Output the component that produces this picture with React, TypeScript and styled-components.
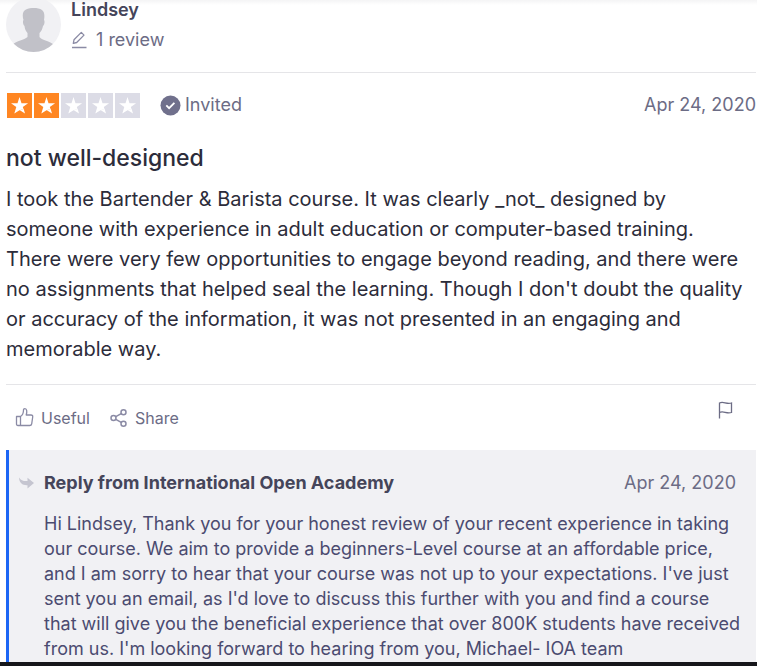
import React from "react";
import styled, { createGlobalStyle } from "styled-components";

const GlobalStyle = createGlobalStyle`
  *, *::before, *::after { box-sizing: border-box; }
  body {
    margin: 0;
    background: #fff;
    color: #2c2c3a;
    font-family: Inter, "Liberation Sans", Arial, sans-serif;
  }
`;

const Page = styled.main`
  border-bottom: 4px solid #16171b;
  background: linear-gradient(#f4f4f5, #fff) top / 100% 5px no-repeat;
`;

const Review = styled.article`
  padding: 0 1px 0 6px;
`;

const Consumer = styled.header`
  display: flex;
  gap: 10px;
  height: 73px;
  border-bottom: 1px solid #e5e5e8;
`;

const ConsumerText = styled.div`
  display: flex;
  flex-direction: column;
`;

const Name = styled.strong`
  font-size: 18px;
  line-height: 20px;
  font-weight: 600;
  color: #45455a;
`;

const ReviewCount = styled.span`
  display: flex;
  align-items: center;
  gap: 8px;
  margin-top: 10px;
  font-size: 18px;
  line-height: 20px;
  color: #6c6c85;
`;

const RatingRow = styled.div`
  display: flex;
  align-items: center;
  margin-top: 19px;
  line-height: 26px;
`;

const Stars = styled.div`
  display: flex;
  gap: 2px;
  margin: 0 20px 0 1px;
`;

const Star = styled.span<{ $on: boolean }>`
  display: flex;
  width: 25px;
  height: 25px;
  background: ${(p) => (p.$on ? "#ff8622" : "#dcdce6")};
`;

const Invited = styled.span`
  display: flex;
  align-items: center;
  gap: 4px;
  font-size: 18px;
  color: #6c6c85;
`;

const DateText = styled.time`
  margin-left: auto;
  white-space: nowrap;
  font-size: 18px;
  font-weight: 400;
  color: #6c6c85;
`;

const Title = styled.h2`
  margin: 26px 0 0;
  font-size: 23px;
  line-height: 28px;
  font-weight: 500;
`;

const Body = styled.p`
  margin: 12px 0 0;
  font-size: 20px;
  line-height: 30px;
`;

const Actions = styled.div`
  display: flex;
  align-items: center;
  gap: 20px;
  height: 66px;
  margin-top: 20px;
  padding: 0 22px 0 9px;
  border-top: 1px solid #e5e5e8;
`;

const Action = styled.button`
  display: flex;
  align-items: center;
  gap: 7px;
  padding: 0;
  border: 0;
  background: none;
  color: #6c6c85;
  font: inherit;
  font-size: 16px;
  line-height: 22px;
  cursor: pointer;
`;

const FlagAction = styled(Action)`
  margin: 0 0 16px auto;
`;

const Reply = styled.section`
  padding: 21px 20px 0 9px;
  border-left: 3px solid #1c66f5;
  background: #f1f1f4;
`;

const ReplyHead = styled.header`
  display: flex;
  align-items: center;
  gap: 9px;
  line-height: 24px;
`;

const ReplyTitle = styled.h3`
  margin: 0;
  font-size: 18px;
  font-weight: 700;
  color: #45455a;
`;

const ReplyBody = styled.p`
  margin: 16px -10px 0 26px;
  padding-bottom: 1px;
  font-size: 18px;
  line-height: 25px;
  color: #4b4b70;
`;

const Avatar = () => (
  <svg width="55" height="52" viewBox="0 3 55 52" role="img" aria-label="Lindsey's avatar">
    <defs>
      <clipPath id="avatar-circle"><circle cx="27.5" cy="27.5" r="27.5" /></clipPath>
    </defs>
    <circle cx="27.5" cy="27.5" r="27.5" fill="#f1f1f4" />
    <path
      clipPath="url(#avatar-circle)"
      fill="#c1c1c8"
      d="M17.500 23c-1.500-5-.8-9 2.500-10.500C25 10.500 32 10.500 36 13c2.500 2 2.800 5.500 2 10 .8.500.8 4.500-1 6-.6 3-1.500 5-3.500 7v4c2 3 9 3.500 15 8v8H6v-8c5-4.500 12-5 15.500-8v-4c-1.700-2-2.700-4-3-7-1.800-1.500-1.800-5.500-1-6z"
    />
  </svg>
);

const Pencil = () => (
  <svg width="17" height="18" viewBox="0 0 17 18" fill="none" stroke="#8b8ba5" strokeWidth="1.300" strokeLinejoin="round" aria-hidden="true">
    <path d="M2.300 12.300 3 8.800 10.300 1.400 13 4.100 5.700 11.500zM1 16.500h14.500" />
  </svg>
);

const StarShape = () => (
  <svg width="25" height="25" viewBox="0 0 25 25" fill="#fff" aria-hidden="true">
    <path d="m12.500 4 2 6.200h6.600l-5.300 3.900.7 2-4 1.100-5.200 3.300 2-6.400L4 10.200h6.500z" />
    <path d="m12.500 17.100 4.200-1.200 1.300 4.600z" />
  </svg>
);

const CheckBadge = () => (
  <svg width="21" height="21" viewBox="0 0 21 21" aria-hidden="true">
    <circle cx="10.500" cy="10.500" r="10" fill="#70708c" />
    <path d="m6.300 10.300 2.800 2.900 5.300-5.400" fill="none" stroke="#fff" strokeWidth="1.800" />
  </svg>
);

const Thumb = () => (
  <svg width="19" height="19" viewBox="0 0 19 19" fill="none" stroke="#8b8ba5" strokeWidth="1.300" strokeLinejoin="round" aria-hidden="true">
    <path d="M1.500 8.500h4v9H3Q1.500 17.500 1.500 16zM5.500 8.500C8 7 8.500 5 8.500 2q0-1.300 1.400-1.300C12 .7 12.200 4 11.200 7H16q2 0 1.700 2l-1 6.800q-.3 1.700-2 1.700H5.500z" />
  </svg>
);

const ShareIcon = () => (
  <svg width="18" height="18" viewBox="0 0 18 18" fill="none" stroke="#8b8ba5" strokeWidth="1.500" aria-hidden="true">
    <circle cx="3.500" cy="9" r="2.500" />
    <circle cx="13.500" cy="3.300" r="2.500" />
    <circle cx="13.500" cy="14.700" r="2.500" />
    <path d="m5.800 7.700 5.400-3.100M5.800 10.300l5.400 3.100" />
  </svg>
);

const Flag = () => (
  <svg width="16" height="18" viewBox="0 0 16 18" fill="none" stroke="#6c6c85" strokeWidth="1.300" aria-hidden="true">
    <path d="M1.500 17.500v-16M1.500 2c4-2 7 1.700 12 0v9.500c-5 1.700-8-2-12 0" />
  </svg>
);

const ReplyArrow = () => (
  <svg width="17" height="14" viewBox="0 0 17 14" aria-hidden="true">
    <path fill="#c5c5d0" d="M1 1.500C3 4.700 5.500 5.200 9.500 5V1.700L16 7l-6.500 5.500V9.200C4.500 9.500 1.300 7 1 1.500z" />
  </svg>
);

export default function App() {
  return (
    <>
      <GlobalStyle />
      <Page>
        <Review>
          <Consumer>
            <Avatar />
            <ConsumerText>
              <Name>Lindsey</Name>
              <ReviewCount><Pencil />1 review</ReviewCount>
            </ConsumerText>
          </Consumer>
          <RatingRow>
            <Stars role="img" aria-label="2 out of 5 stars">
              {[1, 2, 3, 4, 5].map((n) => (
                <Star key={n} $on={n <= 2}><StarShape /></Star>
              ))}
            </Stars>
            <Invited><CheckBadge />Invited</Invited>
            <DateText dateTime="2020-04-24">Apr 24, 2020</DateText>
          </RatingRow>
          <Title>not well-designed</Title>
          <Body>
            I took the Bartender &amp; Barista course. It was clearly _not_ designed by
            <br />
            someone with experience in adult education or computer-based training.
            <br />
            There were very few opportunities to engage beyond reading, and there were
            <br />
            no assignments that helped seal the learning. Though I don't doubt the quality
            <br />
            or accuracy of the information, it was not presented in an engaging and
            <br />
            memorable way.
          </Body>
          <Actions>
            <Action type="button"><Thumb />Useful</Action>
            <Action type="button"><ShareIcon />Share</Action>
            <FlagAction type="button" aria-label="Report review"><Flag /></FlagAction>
          </Actions>
          <Reply>
            <ReplyHead>
              <ReplyArrow />
              <ReplyTitle>Reply from International Open Academy</ReplyTitle>
              <DateText dateTime="2020-04-24">Apr 24, 2020</DateText>
            </ReplyHead>
            <ReplyBody>
              Hi Lindsey, Thank you for your honest review of your recent experience in taking
              <br />
              our course. We aim to provide a beginners-Level course at an affordable price,
              <br />
              and I am sorry to hear that your course was not up to your expectations. I've just
              <br />
              sent you an email, as I'd love to discuss this further with you and find a course
              <br />
              that will give you the beneficial experience that over 800K students have received
              <br />
              from us. I'm looking forward to hearing from you, Michael- IOA team
            </ReplyBody>
          </Reply>
        </Review>
      </Page>
    </>
  );
}
